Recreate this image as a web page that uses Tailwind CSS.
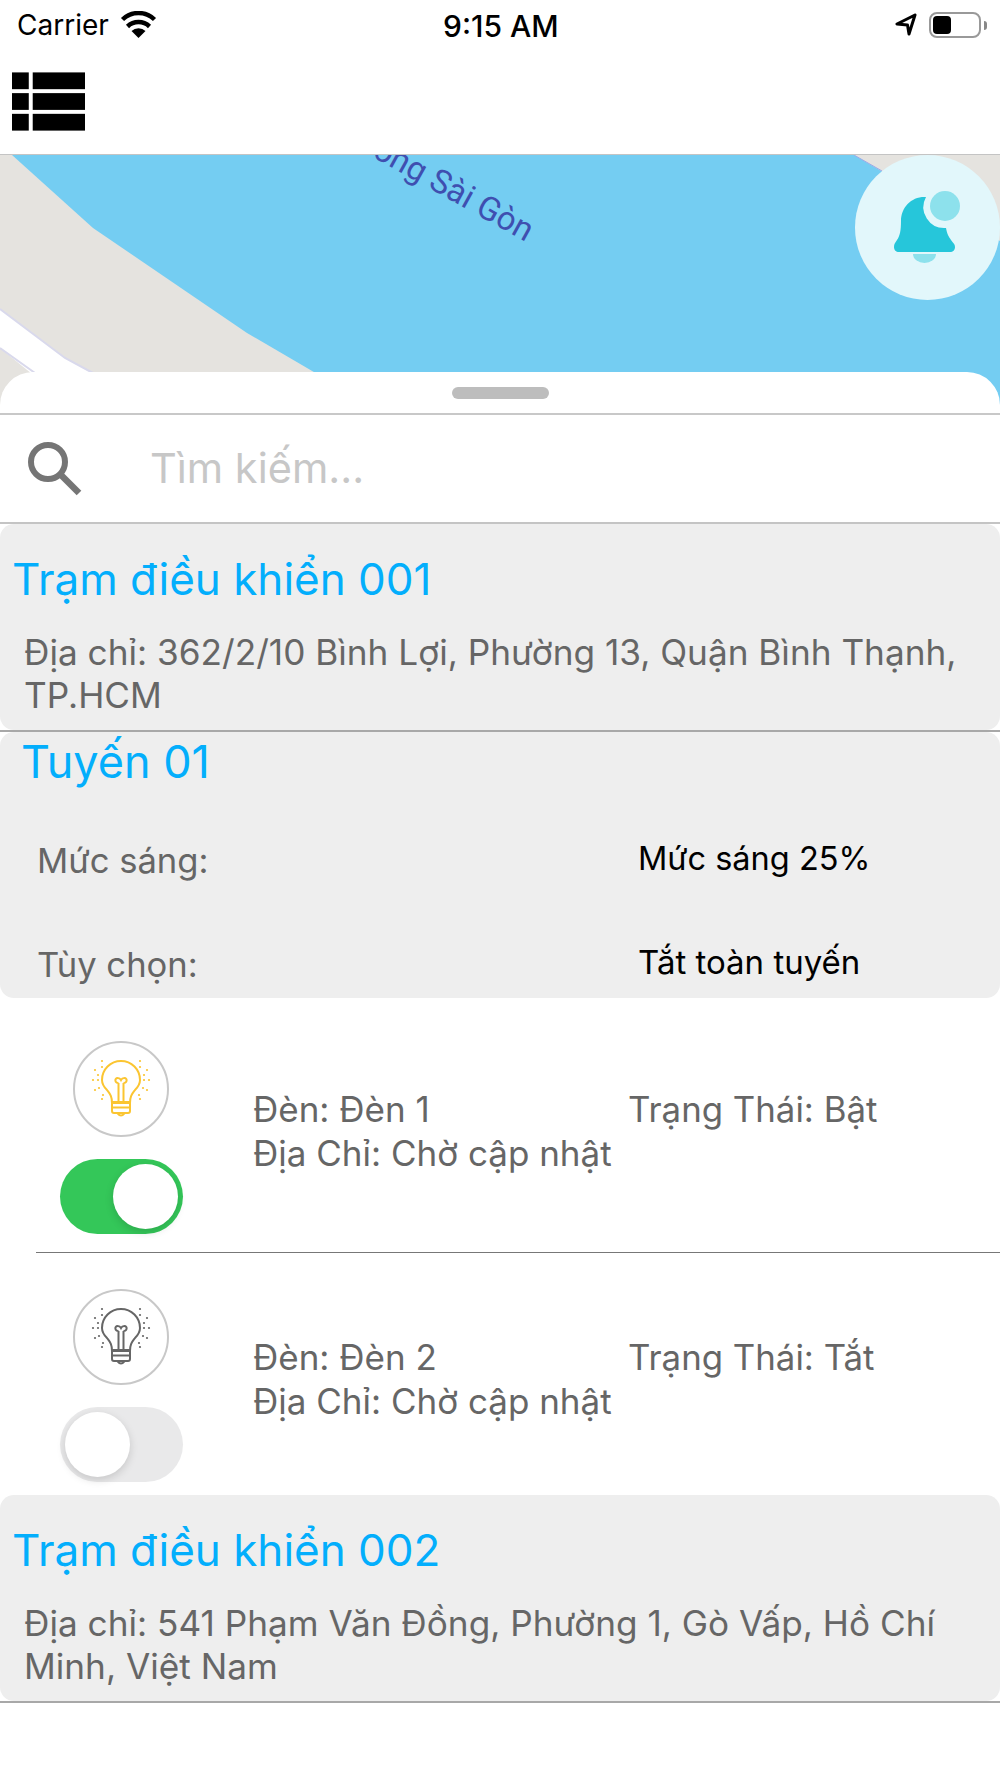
<!DOCTYPE html>
<html lang="vi">
<head>
    <meta charset="UTF-8">
    <meta name="viewport" content="width=device-width, initial-scale=1.0">
    <title>Trạm điều khiển</title>
    <script src="https://cdn.jsdelivr.net/npm/@tailwindcss/browser@4"></script>
</head>
<body class="bg-white font-['Inter',sans-serif] w-[1000px] h-[1778px] overflow-hidden">
    <!-- status bar -->
    <div class="h-[50px] flex items-center justify-between pl-[17px] pr-[13px] relative text-black">
        <div class="flex items-center gap-[11px]">
            <span class="text-[28px] leading-none">Carrier</span>
            <svg width="37" height="28" viewBox="0 0 37 28"><path d="M18.500 27l-7-7a10 10 0 0 1 14 0z" fill="#000"/><path d="M7.500 15.500a16 16 0 0 1 22 0M2.500 8.500a23 23 0 0 1 32 0" fill="none" stroke="#000" stroke-width="4.500"/></svg>
        </div>
        <span class="absolute left-[443px] top-[11px] text-[30px] leading-none font-medium">9:15 AM</span>
        <div class="flex items-center">
            <svg width="22" height="24" viewBox="0 0 22 24" class="mr-[12px]"><path d="M20 2L2 11l10.500 1 1.500 9z" fill="none" stroke="#000" stroke-width="3" stroke-linejoin="round"/></svg>
            <div class="w-[52px] h-[26px] rounded-[8px] border-2 border-[#999] p-[2px]"><div class="w-[18px] h-full bg-black rounded-[4px]"></div></div>
            <div class="ml-[3px] w-[3px] h-[9px] bg-[#888] rounded-r-full"></div>
        </div>
    </div>
    <!-- header -->
    <div class="h-[104px] pl-[12px] pt-[22px]">
        <svg width="73" height="60" viewBox="0 0 74 60" class="block blur-[0.5px]"><g fill="#000"><rect y="0" width="17" height="17"/><rect x="21" y="0" width="53" height="17"/><rect y="21" width="17" height="17"/><rect x="21" y="21" width="53" height="17"/><rect y="42" width="17" height="17"/><rect x="21" y="42" width="53" height="17"/></g></svg>
    </div>
    <!-- map -->
    <div class="relative h-[258px] border-t border-[#c4c4c4] overflow-hidden bg-[#e5e3df]">
        <svg width="1000" height="258" viewBox="0 154 1000 258" class="absolute inset-0">
            <polygon points="12,154 93,227 247,332 384,412 1000,412 1000,240 854,154" fill="#74cdf2"/>
            <polygon points="0,308 65,357 93,372 160,412 80,412 0,347" fill="#fff"/>
            <path d="M0 308L65 357L93 372M0 347L35 372" fill="none" stroke="#d9d9ec" stroke-width="2"/>
            <path d="M854 154L882 170" fill="none" stroke="#9aa8e8" stroke-width="1"/>
            <text x="526" y="241" text-anchor="end" transform="rotate(29 526 241)" font-family="Roboto" font-size="33" fill="#3f4fb0">Sông Sài Gòn</text>
        </svg>
        <div class="absolute left-[855px] top-0 w-[145px] h-[145px] rounded-full bg-[#e2f7fb]">
            <svg width="145" height="145" viewBox="0 0 145 145">
                <path d="M71 42c-14-1-25 10-25 24 0 9-1 15-4 19-2 3-3 4-3 7 0 3 2 5 5 5h51c3 0 5-2 5-5 0-3-2-4-4-7-2-3-4-6-5-12A21 21 0 0 1 71 42z" fill="#26c6da"/>
                <circle cx="90" cy="51" r="15" fill="#8de1ec"/>
                <path d="M58 99h23a11.500 9 0 0 1-23 0z" fill="#8de1ec"/>
            </svg>
        </div>
    </div>
    <!-- bottom sheet -->
    <div class="relative -mt-[40px]">
        <div class="h-[41px] rounded-t-[33px] bg-white flex justify-center pt-[15px]">
            <div class="w-[97px] h-[12px] rounded-full bg-[#bdbdbd]"></div>
        </div>
        <div class="border-t-2 border-[#c8c8c8]"></div>
        <!-- search -->
        <div class="h-[109px] flex items-center pl-[28px] border-b-2 border-[#c4c4c4]">
            <svg width="54" height="54" viewBox="0 0 54 54" class="shrink-0"><circle cx="20" cy="20" r="17" fill="none" stroke="#757575" stroke-width="6"/><path d="M32 32l19 19" stroke="#757575" stroke-width="6.500"/></svg>
            <span class="ml-[68px] text-[41.500px] leading-none text-[#c7c7c7]">Tìm kiếm...</span>
        </div>
        <!-- station 1 -->
        <div class="h-[206px] rounded-[14px] bg-[#eeeeee] pl-[12px] pt-[28px]">
            <div class="text-[44px] leading-[54px] text-[#03aefc]">Trạm điều khiển 001</div>
            <p class="mt-[25px] pl-[12px] pr-[20px] text-[35.200px] leading-[43px] text-[#666]">Địa chỉ: 362/2/10 Bình Lợi, Phường 13, Quận Bình Thạnh, TP.HCM</p>
        </div>
        <div class="border-t-2 border-[#a8a8a8]"></div>
        <!-- line 01 -->
        <div class="h-[266px] rounded-[14px] bg-[#eeeeee] pl-[23px] pt-[3px]">
            <div class="-ml-[2px] text-[45px] leading-[54px] text-[#03aefc]">Tuyến 01</div>
            <div class="grid grid-cols-[601px_1fr] pl-[14px] text-[34.600px] leading-[43px] mt-[50px] gap-y-[61px]">
                <span class="text-[#666]">Mức sáng:</span><span class="-mt-[2px] text-[32.500px] text-black">Mức sáng 25%</span>
                <span class="text-[#666]">Tùy chọn:</span><span class="-mt-[2px] text-[33px] text-black">Tắt toàn tuyến</span>
            </div>
        </div>
        <!-- lamp 1 -->
        <div class="h-[254px] pt-[43px] pl-[60px] flex">
            <div class="w-[123px] flex flex-col items-center gap-[22px]">
                <div class="w-[96px] h-[96px] -ml-[2px] rounded-full border-2 border-[#c8c8c8] relative">
                    <svg width="96" height="96" viewBox="0 0 96 96" class="absolute -left-[2px] -top-[2px] text-[#fbc531]">
                        <g fill="none" stroke="currentColor" stroke-width="2">
                            <path d="M39 62c0-7-2-9-5-13-3-3-5-6-5-10a19 19 0 0 1 38 0c0 4-2 7-5 10-3 4-5 6-5 13z"/>
                            <path d="M45.500 61V42M50.500 61V42M45.500 42c-4 0-4-5-1-5 2 0 3 1 3.500 2 .5-1 1.500-2 3.500-2 3 0 3 5-1 5"/>
                            <path d="M39 61h18v9q0 2-2 2H41q-2 0-2-2zM39 66.500h18M44 72q4 5 8 0"/>
                        </g>
                        <g fill="currentColor"><circle cx="29" cy="20" r="1.100"/><circle cx="22" cy="29" r="1.100"/><circle cx="20" cy="39" r="1.100"/><circle cx="22" cy="49" r="1.100"/><circle cx="29" cy="58" r="1.100"/><circle cx="29" cy="26" r="1.100"/><circle cx="25" cy="34" r="1.100"/><circle cx="25" cy="39" r="1.100"/><circle cx="26" cy="47" r="1.100"/><circle cx="30" cy="54" r="1.100"/><circle cx="67" cy="20" r="1.100"/><circle cx="74" cy="29" r="1.100"/><circle cx="76" cy="39" r="1.100"/><circle cx="74" cy="49" r="1.100"/><circle cx="67" cy="58" r="1.100"/><circle cx="67" cy="26" r="1.100"/><circle cx="71" cy="34" r="1.100"/><circle cx="71" cy="39" r="1.100"/><circle cx="70" cy="47" r="1.100"/><circle cx="66" cy="54" r="1.100"/></g>
                    </svg>
                </div>
                <div class="w-[123px] h-[75px] rounded-full bg-[#34c759] flex items-center justify-end pr-[5px]">
                    <div class="w-[65px] h-[65px] rounded-full bg-white shadow-[0_3px_8px_rgba(0,0,0,0.15)]"></div>
                </div>
            </div>
            <div class="ml-[70px] mt-[46px] w-[375px] text-[35px] leading-[44px] text-[#666]">
                <div>Đèn: Đèn 1</div>
                <div class="whitespace-nowrap">Địa Chỉ: Chờ cập nhật</div>
            </div>
            <div class="mt-[46px] text-[34.800px] leading-[44px] text-[#666] whitespace-nowrap">Trạng Thái: Bật</div>
        </div>
        <div class="ml-[36px] border-t border-[#777]"></div>
        <!-- lamp 2 -->
        <div class="h-[242px] pt-[36px] pl-[60px] flex">
            <div class="w-[123px] flex flex-col items-center gap-[22px]">
                <div class="w-[96px] h-[96px] -ml-[2px] rounded-full border-2 border-[#c8c8c8] relative">
                    <svg width="96" height="96" viewBox="0 0 96 96" class="absolute -left-[2px] -top-[2px] text-[#666]">
                        <g fill="none" stroke="currentColor" stroke-width="2">
                            <path d="M39 62c0-7-2-9-5-13-3-3-5-6-5-10a19 19 0 0 1 38 0c0 4-2 7-5 10-3 4-5 6-5 13z"/>
                            <path d="M45.500 61V42M50.500 61V42M45.500 42c-4 0-4-5-1-5 2 0 3 1 3.500 2 .5-1 1.500-2 3.500-2 3 0 3 5-1 5"/>
                            <path d="M39 61h18v9q0 2-2 2H41q-2 0-2-2zM39 66.500h18M44 72q4 5 8 0"/>
                        </g>
                        <g fill="currentColor"><circle cx="29" cy="20" r="1.100"/><circle cx="22" cy="29" r="1.100"/><circle cx="20" cy="39" r="1.100"/><circle cx="22" cy="49" r="1.100"/><circle cx="29" cy="58" r="1.100"/><circle cx="29" cy="26" r="1.100"/><circle cx="25" cy="34" r="1.100"/><circle cx="25" cy="39" r="1.100"/><circle cx="26" cy="47" r="1.100"/><circle cx="30" cy="54" r="1.100"/><circle cx="67" cy="20" r="1.100"/><circle cx="74" cy="29" r="1.100"/><circle cx="76" cy="39" r="1.100"/><circle cx="74" cy="49" r="1.100"/><circle cx="67" cy="58" r="1.100"/><circle cx="67" cy="26" r="1.100"/><circle cx="71" cy="34" r="1.100"/><circle cx="71" cy="39" r="1.100"/><circle cx="70" cy="47" r="1.100"/><circle cx="66" cy="54" r="1.100"/></g>
                    </svg>
                </div>
                <div class="w-[123px] h-[75px] rounded-full bg-[#e9e9ea] flex items-center pl-[5px]">
                    <div class="w-[65px] h-[65px] rounded-full bg-white shadow-[0_3px_8px_rgba(0,0,0,0.15)]"></div>
                </div>
            </div>
            <div class="ml-[70px] mt-[46px] w-[375px] text-[35px] leading-[44px] text-[#666]">
                <div>Đèn: Đèn 2</div>
                <div class="whitespace-nowrap">Địa Chỉ: Chờ cập nhật</div>
            </div>
            <div class="mt-[46px] text-[34.800px] leading-[44px] text-[#666] whitespace-nowrap">Trạng Thái: Tắt</div>
        </div>
        <!-- station 2 -->
        <div class="h-[206px] rounded-[14px] bg-[#eeeeee] pl-[12px] pt-[28px]">
            <div class="text-[44px] leading-[54px] text-[#03aefc]">Trạm điều khiển 002</div>
            <p class="mt-[25px] pl-[12px] pr-[20px] text-[35.200px] leading-[43px] text-[#666]">Địa chỉ: 541 Phạm Văn Đồng, Phường 1, Gò Vấp, Hồ Chí Minh, Việt Nam</p>
        </div>
        <div class="border-t-2 border-[#a8a8a8]"></div>
    </div>
</body>
</html>
